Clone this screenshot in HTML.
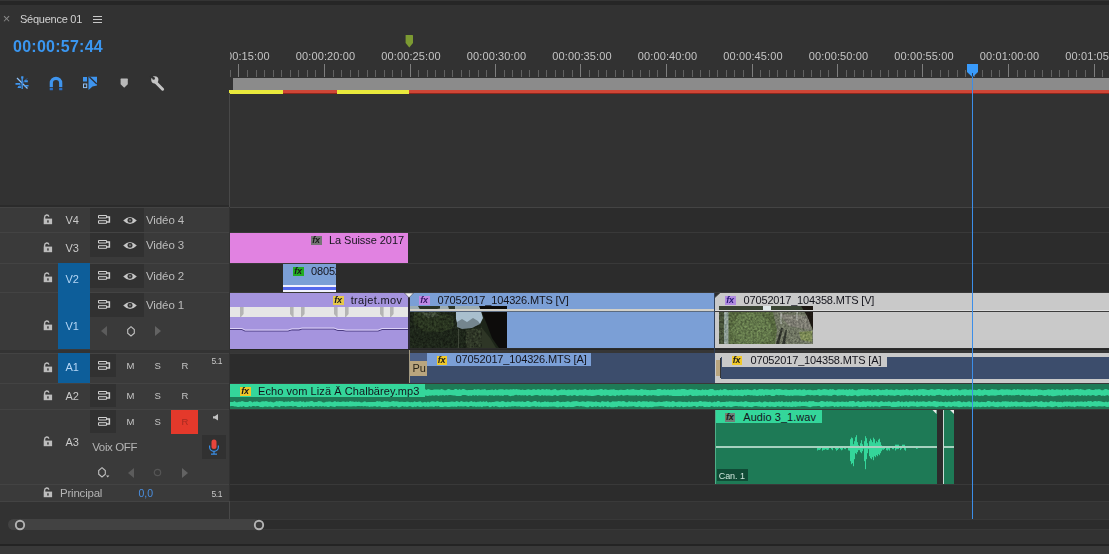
<!DOCTYPE html>
<html lang="fr">
<head>
<meta charset="utf-8">
<title>Séquence 01</title>
<style>
html,body{margin:0;padding:0;background:#323232;}
body{width:1109px;height:554px;position:relative;overflow:hidden;font-family:"Liberation Sans",sans-serif;font-size:11px;color:#b4b4b4;}
.a{position:absolute;}
.t{position:absolute;white-space:nowrap;line-height:12px;}
.ct{position:absolute;white-space:nowrap;line-height:12px;color:#14141c;font-size:11px;letter-spacing:-0.15px;}
.fx{position:absolute;width:10.5px;height:9px;font-size:9px;line-height:8.5px;font-style:italic;font-weight:bold;text-align:center;color:#161616;letter-spacing:-0.3px;text-indent:-0.5px;}
svg{position:absolute;overflow:visible;}
</style>
</head>
<body>
<svg width="0" height="0" style="left:0;top:0"><defs><filter id="nz" x="0" y="0" width="100%" height="100%" color-interpolation-filters="sRGB"><feTurbulence type="fractalNoise" baseFrequency="0.45 0.4" numOctaves="3" seed="4"/><feColorMatrix type="matrix" values="1.6 0 0 0 -0.3  1.6 0 0 0 -0.3  1.6 0 0 0 -0.3  0 0 0 0 1"/></filter><filter id="nz2" x="0" y="0" width="100%" height="100%" color-interpolation-filters="sRGB"><feTurbulence type="fractalNoise" baseFrequency="0.5 0.45" numOctaves="3" seed="9"/><feColorMatrix type="matrix" values="1.4 0 0 0 -0.2  1.4 0 0 0 -0.2  1.4 0 0 0 -0.2  0 0 0 0 1"/></filter></defs></svg>
<div class="a" style="left:0px;top:0px;width:1109px;height:5px;background:#262626;"></div>
<div class="a" style="left:0px;top:0px;width:1109px;height:1px;background:#343434;"></div>
<div class="t" style="left:2.7px;top:13.2px;font-size:13px;color:#8a8a8a;">×</div>
<div class="t" style="left:20px;top:13px;color:#d2d2d2;letter-spacing:-0.25px;">Séquence 01</div>
<svg class="a" style="left:93px;top:16px" width="9" height="8"><path d="M0 .5H9M0 3.5H9M0 6.5H9" stroke="#c8c8c8" stroke-width="1"/></svg>
<div class="t" style="left:13px;top:39px;font-size:16px;line-height:16px;font-weight:bold;color:#3a96f0;letter-spacing:0.25px;">00:00:57:44</div>
<svg style="left:14px;top:75px" width="17" height="16"><path d="M3 3L13.500 13.500" stroke="#8fc0f5" stroke-width="1.2"/><path d="M8.200 2V14" stroke="#3f95ee" stroke-width="1.3"/><path d="M13 3.500L3.500 13" stroke="#2d6fc0" stroke-width="1"/><path d="M7.200 1.200H9.400V3.400H7.200ZM10.500 5.300H13.800V7.200H10.500ZM1.500 8H6.200V9.800H1.500ZM10.500 10H14.500V11.600H10.500ZM4 11.300H7V13H4Z" fill="#3f95ee"/></svg>
<svg style="left:49px;top:76px" width="14" height="15"><path d="M2.300 11V7A4.700 4.700 0 0 1 11.700 7V11" fill="none" stroke="#3f95ee" stroke-width="3.200"/><path d="M.7 11.800H3.900V14.200H.7ZM10.100 11.800H13.300V14.200H10.100Z" fill="#2a70c8"/></svg>
<svg style="left:82px;top:76px" width="16" height="15"><rect x="1" y="1" width="4" height="4.500" fill="#3f95ee"/><rect x="1.500" y="8" width="3.200" height="3.600" fill="none" stroke="#8fc0f5" stroke-width="1"/><path d="M6.500 .8H15V9.500L10.500 10.500L6.500 14Z" fill="#3f95ee"/><path d="M7.500 1L14.800 8" stroke="#2b2f38" stroke-width="1.300"/></svg>
<svg style="left:120px;top:78px" width="9" height="11"><path d="M1 .6H7.300Q7.800 .6 7.800 1.200V6.300L4.200 9.800L.6 6.300V1.200Q.6 .6 1 .6Z" fill="#b9b9b9"/></svg>
<svg style="left:150px;top:75px" width="16" height="16"><path d="M5.200 6.800L12.600 14.200" stroke="#c4c4c4" stroke-width="3" stroke-linecap="round"/><circle cx="4.800" cy="4.800" r="3.600" fill="#c4c4c4"/><path d="M4.300 4.300L1.800 -.5L-.5 1.800Z" fill="#2f2f2f"/><circle cx="3.600" cy="3.400" r="1.300" fill="#2f2f2f"/></svg>
<svg style="left:0;top:0" width="1109" height="100"><path d="M230.5 70V77M247.5 70V77M256.5 70V77M264.5 70V77M273.5 70V77M281.5 70V77M290.5 70V77M298.5 70V77M307.5 70V77M315.5 70V77M333.5 70V77M341.5 70V77M350.5 70V77M358.5 70V77M367.5 70V77M375.5 70V77M384.5 70V77M392.5 70V77M401.5 70V77M418.5 70V77M427.5 70V77M435.5 70V77M444.5 70V77M452.5 70V77M461.5 70V77M469.5 70V77M478.5 70V77M486.5 70V77M504.5 70V77M512.5 70V77M521.5 70V77M529.5 70V77M538.5 70V77M546.5 70V77M555.5 70V77M563.5 70V77M572.5 70V77M589.5 70V77M598.5 70V77M606.5 70V77M615.5 70V77M623.5 70V77M632.5 70V77M640.5 70V77M649.5 70V77M657.5 70V77M675.5 70V77M683.5 70V77M692.5 70V77M700.5 70V77M709.5 70V77M717.5 70V77M726.5 70V77M734.5 70V77M743.5 70V77M760.5 70V77M769.5 70V77M777.5 70V77M786.5 70V77M794.5 70V77M803.5 70V77M811.5 70V77M820.5 70V77M828.5 70V77M846.5 70V77M854.5 70V77M863.5 70V77M871.5 70V77M880.5 70V77M888.5 70V77M897.5 70V77M905.5 70V77M914.5 70V77M931.5 70V77M940.5 70V77M948.5 70V77M957.5 70V77M965.5 70V77M974.5 70V77M982.5 70V77M991.5 70V77M999.5 70V77M1017.5 70V77M1025.5 70V77M1034.5 70V77M1042.5 70V77M1051.5 70V77M1059.5 70V77M1068.5 70V77M1076.5 70V77M1085.5 70V77M1102.5 70V77" stroke="#626262" stroke-width="1" fill="none"/><path d="M238.5 64V77M324.5 64V77M410.5 64V77M495.5 64V77M580.5 64V77M666.5 64V77M752.5 64V77M837.5 64V77M922.5 64V77M1008.5 64V77M1094.5 64V77" stroke="#7e7e7e" stroke-width="1" fill="none"/></svg>
<div class="a" style="left:230px;top:44px;width:879px;height:20px;overflow:hidden;">
<div class="t" style="left:-30.0px;top:6px;width:80px;text-align:center;color:#c4c4c4;letter-spacing:0.12px;">00:00:15:00</div>
<div class="t" style="left:55.5px;top:6px;width:80px;text-align:center;color:#c4c4c4;letter-spacing:0.12px;">00:00:20:00</div>
<div class="t" style="left:141.0px;top:6px;width:80px;text-align:center;color:#c4c4c4;letter-spacing:0.12px;">00:00:25:00</div>
<div class="t" style="left:226.5px;top:6px;width:80px;text-align:center;color:#c4c4c4;letter-spacing:0.12px;">00:00:30:00</div>
<div class="t" style="left:312.0px;top:6px;width:80px;text-align:center;color:#c4c4c4;letter-spacing:0.12px;">00:00:35:00</div>
<div class="t" style="left:397.5px;top:6px;width:80px;text-align:center;color:#c4c4c4;letter-spacing:0.12px;">00:00:40:00</div>
<div class="t" style="left:483.0px;top:6px;width:80px;text-align:center;color:#c4c4c4;letter-spacing:0.12px;">00:00:45:00</div>
<div class="t" style="left:568.5px;top:6px;width:80px;text-align:center;color:#c4c4c4;letter-spacing:0.12px;">00:00:50:00</div>
<div class="t" style="left:654.0px;top:6px;width:80px;text-align:center;color:#c4c4c4;letter-spacing:0.12px;">00:00:55:00</div>
<div class="t" style="left:739.5px;top:6px;width:80px;text-align:center;color:#c4c4c4;letter-spacing:0.12px;">00:01:00:00</div>
<div class="t" style="left:825.0px;top:6px;width:80px;text-align:center;color:#c4c4c4;letter-spacing:0.12px;">00:01:05:00</div>
</div>
<div class="a" style="left:233px;top:78px;width:876px;height:12px;background:#8b8b8b;"></div>
<div class="a" style="left:229px;top:90px;width:880px;height:3.5px;background:#8e261d;"></div>
<div class="a" style="left:229px;top:90px;width:880px;height:2.6px;background:#cf4636;"></div>
<div class="a" style="left:229px;top:90px;width:54px;height:3.5px;background:#e9e93c;"></div>
<div class="a" style="left:337px;top:90px;width:72px;height:3.5px;background:#e9e93c;"></div>
<svg style="left:405px;top:35px" width="9" height="13"><path d="M1 0H7.5Q8 0 8 .6V8L4.3 12.5L.6 8V.6Q.6 0 1 0Z" fill="#7c9a32"/></svg>
<div class="a" style="left:229px;top:93px;width:1px;height:114px;background:#484848;"></div>
<div class="a" style="left:229px;top:501px;width:1px;height:18px;background:#484848;"></div>
<div class="a" style="left:0px;top:205px;width:229px;height:2px;background:#2b2b2b;"></div>
<div class="a" style="left:0px;top:207px;width:229px;height:294px;background:#3a3a3a;"></div>
<div class="a" style="left:0px;top:207px;width:229px;height:1px;background:#434343;"></div>
<div class="a" style="left:0px;top:232px;width:229px;height:1px;background:#434343;"></div>
<div class="a" style="left:0px;top:263px;width:229px;height:1px;background:#434343;"></div>
<div class="a" style="left:0px;top:292px;width:229px;height:1px;background:#434343;"></div>
<div class="a" style="left:0px;top:353px;width:229px;height:1px;background:#434343;"></div>
<div class="a" style="left:0px;top:383px;width:229px;height:1px;background:#434343;"></div>
<div class="a" style="left:0px;top:409px;width:229px;height:1px;background:#434343;"></div>
<div class="a" style="left:0px;top:484px;width:229px;height:1px;background:#434343;"></div>
<div class="a" style="left:0px;top:350px;width:229px;height:3px;background:#333;"></div>
<div class="a" style="left:0px;top:501px;width:229px;height:1px;background:#434343;"></div>
<div class="a" style="left:230px;top:207px;width:879px;height:294px;background:#2c2c2c;"></div>
<div class="a" style="left:230px;top:207px;width:879px;height:1px;background:#444;"></div>
<div class="a" style="left:230px;top:232px;width:879px;height:1px;background:#393939;"></div>
<div class="a" style="left:230px;top:263px;width:879px;height:1px;background:#393939;"></div>
<div class="a" style="left:230px;top:292px;width:879px;height:1px;background:#393939;"></div>
<div class="a" style="left:230px;top:353px;width:879px;height:1px;background:#393939;"></div>
<div class="a" style="left:230px;top:383px;width:879px;height:1px;background:#393939;"></div>
<div class="a" style="left:230px;top:409px;width:879px;height:1px;background:#393939;"></div>
<div class="a" style="left:230px;top:484px;width:879px;height:1px;background:#393939;"></div>
<div class="a" style="left:230px;top:349px;width:879px;height:1px;background:#262626;"></div>
<div class="a" style="left:230px;top:350px;width:879px;height:3px;background:#363636;"></div>
<div class="a" style="left:230px;top:501px;width:879px;height:1px;background:#3a3a3a;"></div>
<div class="a" style="left:58px;top:263px;width:32px;height:86px;background:#0d5e9a;"></div>
<div class="a" style="left:58px;top:353px;width:32px;height:30px;background:#0d5e9a;"></div>
<div class="a" style="left:90px;top:208px;width:54px;height:24px;background:#313131;"></div>
<svg style="left:43px;top:214px" width="10" height="11"><path d="M1.6 5V3.2A2.2 2.3 0 0 1 5.9 2.6" fill="none" stroke="#bdbdbd" stroke-width="1.4"/><rect x="0.7" y="4.6" width="8.4" height="5.6" fill="#bdbdbd"/><rect x="4.2" y="6.3" width="1.5" height="2.3" fill="#3a3a3a"/></svg>
<div class="t" style="left:65.5px;top:213.8px;color:#c9c9c9;font-size:11px;">V4</div>
<svg style="left:98px;top:215px" width="13" height="9" shape-rendering="geometricPrecision"><path d="M.5 .5H8.500V3H.5ZM.5 5.700H8.500V8.300H.5Z" fill="none" stroke="#cfcfcf" stroke-width="1"/><path d="M9 2H11.400V7H9" fill="none" stroke="#cfcfcf" stroke-width="1.500"/></svg>
<svg style="left:123px;top:216px" width="14" height="9"><path d="M.2 4.4Q7 -2.6 13.8 4.4Q7 11.4 .2 4.4Z" fill="#c6c6c6"/><circle cx="7" cy="4.2" r="2.5" fill="#333"/><circle cx="7" cy="4.2" r="1" fill="#777"/></svg>
<div class="t" style="left:146px;top:214px;color:#bcbcbc;font-size:11.5px;letter-spacing:-0.1px;">Vidéo 4</div>
<div class="a" style="left:90px;top:233px;width:54px;height:24px;background:#313131;"></div>
<svg style="left:43px;top:242px" width="10" height="11"><path d="M1.6 5V3.2A2.2 2.3 0 0 1 5.9 2.6" fill="none" stroke="#bdbdbd" stroke-width="1.4"/><rect x="0.7" y="4.6" width="8.4" height="5.6" fill="#bdbdbd"/><rect x="4.2" y="6.3" width="1.5" height="2.3" fill="#3a3a3a"/></svg>
<div class="t" style="left:65.5px;top:241.8px;color:#c9c9c9;font-size:11px;">V3</div>
<svg style="left:98px;top:240px" width="13" height="9" shape-rendering="geometricPrecision"><path d="M.5 .5H8.500V3H.5ZM.5 5.700H8.500V8.300H.5Z" fill="none" stroke="#cfcfcf" stroke-width="1"/><path d="M9 2H11.400V7H9" fill="none" stroke="#cfcfcf" stroke-width="1.500"/></svg>
<svg style="left:123px;top:241px" width="14" height="9"><path d="M.2 4.4Q7 -2.6 13.8 4.4Q7 11.4 .2 4.4Z" fill="#c6c6c6"/><circle cx="7" cy="4.2" r="2.5" fill="#333"/><circle cx="7" cy="4.2" r="1" fill="#777"/></svg>
<div class="t" style="left:146px;top:239px;color:#bcbcbc;font-size:11.5px;letter-spacing:-0.1px;">Vidéo 3</div>
<div class="a" style="left:90px;top:264px;width:54px;height:24px;background:#313131;"></div>
<svg style="left:43px;top:272px" width="10" height="11"><path d="M1.6 5V3.2A2.2 2.3 0 0 1 5.9 2.6" fill="none" stroke="#bdbdbd" stroke-width="1.4"/><rect x="0.7" y="4.6" width="8.4" height="5.6" fill="#bdbdbd"/><rect x="4.2" y="6.3" width="1.5" height="2.3" fill="#3a3a3a"/></svg>
<div class="t" style="left:65.5px;top:272.8px;color:#c9c9c9;font-size:11px;color:#b5d6f5;">V2</div>
<svg style="left:98px;top:271px" width="13" height="9" shape-rendering="geometricPrecision"><path d="M.5 .5H8.500V3H.5ZM.5 5.700H8.500V8.300H.5Z" fill="none" stroke="#cfcfcf" stroke-width="1"/><path d="M9 2H11.400V7H9" fill="none" stroke="#cfcfcf" stroke-width="1.500"/></svg>
<svg style="left:123px;top:272px" width="14" height="9"><path d="M.2 4.4Q7 -2.6 13.8 4.4Q7 11.4 .2 4.4Z" fill="#c6c6c6"/><circle cx="7" cy="4.2" r="2.5" fill="#333"/><circle cx="7" cy="4.2" r="1" fill="#777"/></svg>
<div class="t" style="left:146px;top:270px;color:#bcbcbc;font-size:11.5px;letter-spacing:-0.1px;">Vidéo 2</div>
<div class="a" style="left:90px;top:293px;width:54px;height:24px;background:#313131;"></div>
<svg style="left:43px;top:320px" width="10" height="11"><path d="M1.6 5V3.2A2.2 2.3 0 0 1 5.9 2.6" fill="none" stroke="#bdbdbd" stroke-width="1.4"/><rect x="0.7" y="4.6" width="8.4" height="5.6" fill="#bdbdbd"/><rect x="4.2" y="6.3" width="1.5" height="2.3" fill="#3a3a3a"/></svg>
<div class="t" style="left:65.5px;top:319.8px;color:#c9c9c9;font-size:11px;color:#b5d6f5;">V1</div>
<svg style="left:98px;top:300px" width="13" height="9" shape-rendering="geometricPrecision"><path d="M.5 .5H8.500V3H.5ZM.5 5.700H8.500V8.300H.5Z" fill="none" stroke="#cfcfcf" stroke-width="1"/><path d="M9 2H11.400V7H9" fill="none" stroke="#cfcfcf" stroke-width="1.500"/></svg>
<svg style="left:123px;top:301px" width="14" height="9"><path d="M.2 4.4Q7 -2.6 13.8 4.4Q7 11.4 .2 4.4Z" fill="#c6c6c6"/><circle cx="7" cy="4.2" r="2.5" fill="#333"/><circle cx="7" cy="4.2" r="1" fill="#777"/></svg>
<div class="t" style="left:146px;top:299px;color:#bcbcbc;font-size:11.5px;letter-spacing:-0.1px;">Vidéo 1</div>
<svg style="left:101px;top:326px" width="6" height="10"><path d="M6 0V10L0 5Z" fill="#5c5c5c"/></svg>
<svg style="left:127px;top:325.5px" width="8" height="11"><path d="M4 .7L7.300 3.500V7.200L4 10L.7 7.200V3.500Z" fill="none" stroke="#c0c0c0" stroke-width="1.1"/></svg>
<svg style="left:155px;top:326px" width="6" height="10"><path d="M0 0V10L6 5Z" fill="#636363"/></svg>
<div class="a" style="left:90px;top:354px;width:26px;height:23px;background:#313131;"></div>
<svg style="left:43px;top:361.5px" width="10" height="11"><path d="M1.6 5V3.2A2.2 2.3 0 0 1 5.9 2.6" fill="none" stroke="#bdbdbd" stroke-width="1.4"/><rect x="0.7" y="4.6" width="8.4" height="5.6" fill="#bdbdbd"/><rect x="4.2" y="6.3" width="1.5" height="2.3" fill="#3a3a3a"/></svg>
<div class="t" style="left:65.5px;top:361.3px;color:#c9c9c9;font-size:11px;color:#b5d6f5;">A1</div>
<svg style="left:98px;top:360.6px" width="13" height="9" shape-rendering="geometricPrecision"><path d="M.5 .5H8.500V3H.5ZM.5 5.700H8.500V8.300H.5Z" fill="none" stroke="#cfcfcf" stroke-width="1"/><path d="M9 2H11.400V7H9" fill="none" stroke="#cfcfcf" stroke-width="1.500"/></svg>
<div class="t" style="left:126.5px;top:359.9px;color:#c6c6c6;font-size:9.5px;">M</div>
<div class="t" style="left:154.5px;top:359.9px;color:#c6c6c6;font-size:9.5px;">S</div>
<div class="t" style="left:181.5px;top:359.9px;color:#c6c6c6;font-size:9.5px;">R</div>
<div class="a" style="left:90px;top:384px;width:26px;height:23px;background:#313131;"></div>
<svg style="left:43px;top:390px" width="10" height="11"><path d="M1.6 5V3.2A2.2 2.3 0 0 1 5.9 2.6" fill="none" stroke="#bdbdbd" stroke-width="1.4"/><rect x="0.7" y="4.6" width="8.4" height="5.6" fill="#bdbdbd"/><rect x="4.2" y="6.3" width="1.5" height="2.3" fill="#3a3a3a"/></svg>
<div class="t" style="left:65.5px;top:389.8px;color:#c9c9c9;font-size:11px;">A2</div>
<svg style="left:98px;top:390.6px" width="13" height="9" shape-rendering="geometricPrecision"><path d="M.5 .5H8.500V3H.5ZM.5 5.700H8.500V8.300H.5Z" fill="none" stroke="#cfcfcf" stroke-width="1"/><path d="M9 2H11.400V7H9" fill="none" stroke="#cfcfcf" stroke-width="1.500"/></svg>
<div class="t" style="left:126.5px;top:389.9px;color:#c6c6c6;font-size:9.5px;">M</div>
<div class="t" style="left:154.5px;top:389.9px;color:#c6c6c6;font-size:9.5px;">S</div>
<div class="t" style="left:181.5px;top:389.9px;color:#c6c6c6;font-size:9.5px;">R</div>
<div class="a" style="left:90px;top:410px;width:26px;height:23px;background:#313131;"></div>
<svg style="left:43px;top:436px" width="10" height="11"><path d="M1.6 5V3.2A2.2 2.3 0 0 1 5.9 2.6" fill="none" stroke="#bdbdbd" stroke-width="1.4"/><rect x="0.7" y="4.6" width="8.4" height="5.6" fill="#bdbdbd"/><rect x="4.2" y="6.3" width="1.5" height="2.3" fill="#3a3a3a"/></svg>
<div class="t" style="left:65.5px;top:435.8px;color:#c9c9c9;font-size:11px;">A3</div>
<svg style="left:98px;top:416.6px" width="13" height="9" shape-rendering="geometricPrecision"><path d="M.5 .5H8.500V3H.5ZM.5 5.700H8.500V8.300H.5Z" fill="none" stroke="#cfcfcf" stroke-width="1"/><path d="M9 2H11.400V7H9" fill="none" stroke="#cfcfcf" stroke-width="1.500"/></svg>
<div class="t" style="left:126.5px;top:415.9px;color:#c6c6c6;font-size:9.5px;">M</div>
<div class="t" style="left:154.5px;top:415.9px;color:#c6c6c6;font-size:9.5px;">S</div>
<div class="a" style="left:171px;top:410px;width:27px;height:24px;background:#e4392b;"></div>
<div class="t" style="left:181.5px;top:415.9px;color:#a52a20;font-size:9.5px;">R</div>
<div class="t" style="left:211.5px;top:355px;color:#c8c8c8;font-size:8.5px;letter-spacing:-0.45px;">5.1</div>
<svg style="left:213px;top:414px" width="6" height="7"><path d="M0 2.2H1.8L5 0V6.5L1.8 4.4H0Z" fill="#c2c2c2"/></svg>
<div class="t" style="left:92.2px;top:441px;color:#b4b4b4;font-size:11.5px;letter-spacing:-0.366px;">Voix OFF</div>
<div class="a" style="left:202px;top:435px;width:24px;height:24px;background:#313131;"></div>
<svg style="left:208px;top:439px" width="12" height="16"><rect x="3.5" y=".5" width="5" height="9.5" rx="2.5" fill="#e8453c"/><path d="M1.6 6.5V8A4.4 4.4 0 0 0 10.4 8V6.5" fill="none" stroke="#3a8fe8" stroke-width="1.2"/><path d="M6 12.2V15M3 15.2H9" stroke="#3a8fe8" stroke-width="1.2" fill="none"/></svg>
<svg style="left:98px;top:467px" width="8" height="11"><path d="M4 .7L7.300 3.500V7.200L4 10L.7 7.200V3.500Z" fill="none" stroke="#c0c0c0" stroke-width="1.1"/></svg>
<svg style="left:106px;top:475px" width="4" height="3"><path d="M0 .5H3.4L1.7 2.6Z" fill="#c0c0c0"/></svg>
<svg style="left:128px;top:468px" width="6" height="10"><path d="M6 0V10L0 5Z" fill="#5c5c5c"/></svg>
<svg style="left:182px;top:468px" width="6" height="10"><path d="M0 0V10L6 5Z" fill="#636363"/></svg>
<svg style="left:153px;top:467px" width="9" height="11"><circle cx="4.5" cy="5.5" r="3.2" fill="none" stroke="#555" stroke-width="1.2"/></svg>
<svg style="left:43px;top:487px" width="10" height="11"><path d="M1.6 5V3.2A2.2 2.3 0 0 1 5.9 2.6" fill="none" stroke="#bdbdbd" stroke-width="1.4"/><rect x="0.7" y="4.6" width="8.4" height="5.6" fill="#bdbdbd"/><rect x="4.2" y="6.3" width="1.5" height="2.3" fill="#3a3a3a"/></svg>
<div class="t" style="left:60px;top:487px;color:#b4b4b4;font-size:11.5px;letter-spacing:-0.211px;">Principal</div>
<div class="t" style="left:138.5px;top:487px;color:#4a8fe0;font-size:10.5px;">0,0</div>
<div class="t" style="left:211.5px;top:488px;color:#c8c8c8;font-size:8.5px;letter-spacing:-0.45px;">5.1</div>
<div class="a" style="left:230px;top:233px;width:178px;height:30px;background:#e182e1;overflow:hidden;"></div>
<div class="fx" style="left:311px;top:236px;background:#757575;color:#1a1a1a;">fx</div>
<div class="ct" style="left:329px;top:233.6px;letter-spacing:-0.060px;">La Suisse 2017</div>
<div class="a" style="left:283px;top:264px;width:53px;height:28px;background:#7b9fd6;overflow:hidden;"><div class="ct" style="left:28px;top:0.8px;">08052</div></div>
<div class="fx" style="left:293px;top:267px;background:#22ac22;color:#1a1a1a;">fx</div>
<div class="a" style="left:283px;top:285px;width:53px;height:7px;background:#f2f2ff;"></div>
<div class="a" style="left:283px;top:286.5px;width:53px;height:3.5px;background:#5468ec;"></div>
<div class="a" style="left:230px;top:293px;width:178px;height:56px;background:#a594de;overflow:hidden;"></div>
<div class="a" style="left:230px;top:307px;width:178px;height:10px;background:#e6e6e6;"></div>
<svg style="left:0;top:307px" width="420" height="10"><path d="M240 0H243.6V7L241 10H240ZM290 0H293.6V10H292.6L290 7ZM301 0H304.6V7L302 10H301ZM334 0H337.6V10H336.6L334 7ZM345 0H348.6V7L346 10H345ZM380 0H383.6V10H382.6L380 7ZM390 0H393.6V7L391 10H390Z" fill="#b4b4b4"/></svg>
<svg style="left:0;top:0" width="420" height="350"><path d="M230 328.5H242L245 330H288L292 328.8H299L302 328H334L338 329.5H343L346 330H378L382 328.5H408" transform="translate(0,1)" fill="none" stroke="#4a3b82" stroke-width="1.2"/><path d="M230 328.5H242L245 330H288L292 328.8H299L302 328H334L338 329.5H343L346 330H378L382 328.5H408" fill="none" stroke="#ddd2f7" stroke-width="1"/></svg>
<div class="fx" style="left:333px;top:296px;background:#e6c84a;color:#1a1a1a;">fx</div>
<div class="ct" style="left:350.7px;top:293.6px;letter-spacing:0.331px;">trajet.mov</div>
<div class="a" style="left:409px;top:293px;width:306px;height:55px;background:#7b9fd6;overflow:hidden;"></div>
<div class="fx" style="left:419px;top:296px;background:#c08ae6;color:#3a1a6a;">fx</div>
<div class="ct" style="left:437.6px;top:293.6px;letter-spacing:-0.154px;">07052017_104326.MTS [V]</div>
<svg style="left:410px;top:306px" width="97" height="42" viewBox="0 0 97 42"><rect width="97" height="42" fill="#1d2519"/><path d="M4 5L22 4L34 8L43 10L44 22L30 26L12 25L3 16Z" fill="#28331f"/><path d="M10 6L24 5L30 10L18 12Z" fill="#3b4634"/><path d="M56 24L72 22L80 32L86 42H56Z" fill="#2e3626"/><rect width="72" height="42" filter="url(#nz)" style="mix-blend-mode:overlay" opacity=".4"/><path d="M0 0H70V3.500H0Z" fill="#9cacb2"/><path d="M8 0H30V2.500L24 3.500H10ZM38 0H45V3H39Z" fill="#2a3326"/><path d="M46 5H71L73 12L70 18L66 15L62 19L56 18L52 21L47.500 19L46 13Z" fill="#a9bfce"/><path d="M47 16L52 13L57 16L63 12L68 15L70 18L62 22L52 23L47 21Z" fill="#74858e"/><path d="M48.500 23V42" stroke="#4e5446" stroke-width=".7"/><path d="M69 0H97V42H89L82 32L76 16Z" fill="#0d0c0b"/></svg>
<div class="a" style="left:409px;top:308.5px;width:306px;height:2px;background:#d2d0c8;"></div>
<div class="a" style="left:409px;top:310.5px;width:306px;height:0.8px;background:#5a6a80;"></div>
<div class="a" style="left:715px;top:293px;width:394px;height:55px;background:#c9c9c9;overflow:hidden;"></div>
<div class="fx" style="left:725px;top:296px;background:#b08ae0;color:#2a1a7a;">fx</div>
<div class="ct" style="left:743.6px;top:293.6px;letter-spacing:-0.172px;">07052017_104358.MTS [V]</div>
<svg style="left:719px;top:306px" width="94" height="38" viewBox="0 0 94 38"><rect width="94" height="38" fill="#56683f"/><rect width="94" height="4" fill="#3a4434"/><path d="M44 0H52V4H44Z" fill="#dfe8ea"/><rect x="5" y="4" width="4.5" height="34" fill="#8c9c94"/><path d="M0 4H5V38H0Z" fill="#46523a"/><path d="M54 6L94 4V38H56L58 24Z" fill="#6f7562"/><path d="M60 8L90 10L92 24L70 20Z" fill="#7d7c72"/><path d="M64 22L60 38H57L62 22ZM68 24L66 38H63L66.500 24Z" fill="#30342c"/><path d="M82 0H94V24L88 10Z" fill="#1c1712"/><path d="M20 8L40 6L52 18L54 34L40 38H18L12 24Z" fill="#62774a"/><path d="M80 26L93 25V36L82 34Z" fill="#7c8a56"/><path d="M62 6V18M78 5V14" stroke="#c8ccc8" stroke-width=".8"/><rect y="4" width="94" height="34" filter="url(#nz2)" style="mix-blend-mode:overlay" opacity=".32"/></svg>
<div class="a" style="left:715px;top:309.5px;width:394px;height:1.2px;background:#dcdcdc;"></div>
<div class="a" style="left:715px;top:310.6px;width:394px;height:1px;background:#3c3c3c;"></div>
<svg style="left:715px;top:293px" width="6" height="5"><path d="M0 0H5L0 4.500Z" fill="#2c2c2c"/><path d="M0 4.5L5 0" stroke="#555" stroke-width=".8"/></svg>
<div class="a" style="left:408px;top:293px;width:1.8px;height:56px;background:#2e2a3c;"></div>
<div class="a" style="left:409px;top:350px;width:1.3px;height:33px;background:#a39a82;"></div>
<div class="a" style="left:714px;top:293px;width:1px;height:90px;background:#30405a;"></div>
<div class="a" style="left:410px;top:353px;width:305px;height:30px;background:#3c4d6c;overflow:hidden;"></div>
<div class="a" style="left:410px;top:353px;width:17px;height:8px;background:#4c6088;"></div>
<div class="a" style="left:427px;top:353px;width:164px;height:13px;background:#7b9fd6;"></div>
<div class="fx" style="left:436.5px;top:355.5px;background:#f0c828;color:#1a1a1a;">fx</div>
<div class="ct" style="left:455.6px;top:353.1px;letter-spacing:-0.154px;">07052017_104326.MTS [A]</div>
<div class="a" style="left:410px;top:361px;width:16.5px;height:14.5px;background:#b9a57e;"></div>
<div class="ct" style="left:412.5px;top:361.6px;color:#2a2418;">Pu</div>
<div class="a" style="left:715px;top:353px;width:394px;height:30px;background:#c9c9c9;overflow:hidden;"></div>
<div class="a" style="left:721px;top:357px;width:388px;height:21.5px;background:#3c4d6c;"></div>
<div class="a" style="left:721.5px;top:356.5px;width:165px;height:10px;background:#c9c9c9;"></div>
<div class="fx" style="left:731.5px;top:356px;background:#f0c828;color:#1a1a1a;">fx</div>
<div class="ct" style="left:750.5px;top:354.1px;letter-spacing:-0.163px;">07052017_104358.MTS [A]</div>
<div class="a" style="left:716px;top:360px;width:5px;height:16px;background:#b9a57e;"></div>
<div class="a" style="left:719.5px;top:358px;width:1.5px;height:20px;background:#333;"></div>
<svg style="left:404px;top:293px" width="10" height="6"><path d="M.5 0H9.500L5 4.800Z" fill="#f0f0f0" stroke="#3a3a3a" stroke-width=".5"/></svg>
<div class="a" style="left:230px;top:384px;width:879px;height:24.5px;background:#1e7a56;overflow:hidden;"></div>
<svg style="left:0;top:0" width="1109" height="420"><path d="M230.0 389.2L231.5 389.4L233.0 389.8L234.5 388.9L236.0 389.3L237.5 390.3L239.0 390.1L240.5 389.8L242.0 389.8L243.5 389.6L245.0 389.8L246.5 390.0L248.0 389.3L249.5 390.1L251.0 389.9L252.5 389.9L254.0 389.5L255.5 389.5L257.0 390.1L258.5 389.1L260.0 390.3L261.5 389.8L263.0 389.6L264.5 389.4L266.0 389.7L267.5 389.9L269.0 390.1L270.5 389.8L272.0 390.1L273.5 390.2L275.0 389.9L276.5 390.1L278.0 389.3L279.5 390.1L281.0 389.0L282.5 389.5L284.0 389.3L285.5 390.1L287.0 389.8L288.5 389.9L290.0 390.1L291.5 389.6L293.0 389.3L294.5 389.7L296.0 389.2L297.5 389.8L299.0 389.0L300.5 389.3L302.0 390.2L303.5 389.5L305.0 389.8L306.5 389.7L308.0 390.2L309.5 389.5L311.0 389.2L312.5 390.3L314.0 389.7L315.5 389.5L317.0 388.9L318.5 389.8L320.0 389.8L321.5 389.9L323.0 389.9L324.5 388.9L326.0 389.8L327.5 389.3L329.0 389.7L330.5 389.4L332.0 389.4L333.5 389.3L335.0 390.0L336.5 389.7L338.0 389.3L339.5 390.0L341.0 389.2L342.5 389.9L344.0 389.4L345.5 390.1L347.0 390.1L348.5 389.4L350.0 390.1L351.5 389.2L353.0 389.6L354.5 390.0L356.0 389.2L357.5 390.0L359.0 390.0L360.5 389.1L362.0 390.0L363.5 389.4L365.0 389.5L366.5 390.2L368.0 388.9L369.5 390.1L371.0 389.5L372.5 390.2L374.0 389.9L375.5 389.8L377.0 389.3L378.5 389.2L380.0 389.7L381.5 390.0L383.0 390.2L384.5 390.2L386.0 390.2L387.5 388.9L389.0 389.1L390.5 389.8L392.0 389.5L393.5 389.8L395.0 389.3L396.5 389.6L398.0 389.4L399.5 389.6L401.0 389.1L402.5 390.2L404.0 390.1L405.5 389.8L407.0 389.0L408.5 389.3L410.0 389.5L411.5 390.0L413.0 389.0L414.5 389.1L416.0 390.3L417.5 389.0L419.0 389.3L420.5 389.4L422.0 389.7L423.5 389.2L425.0 389.1L426.5 389.9L428.0 389.0L429.5 389.4L431.0 390.0L432.5 390.0L434.0 389.5L435.5 389.6L437.0 389.5L438.5 389.5L440.0 389.7L441.5 389.0L443.0 389.5L444.5 390.2L446.0 390.2L447.5 389.3L449.0 389.1L450.5 389.8L452.0 390.0L453.5 389.9L455.0 389.0L456.5 388.9L458.0 390.0L459.5 389.0L461.0 390.1L462.5 388.9L464.0 389.1L465.5 389.8L467.0 390.2L468.5 390.0L470.0 390.0L471.5 389.9L473.0 389.9L474.5 389.0L476.0 389.7L477.5 389.2L479.0 389.2L480.5 390.0L482.0 389.4L483.5 389.4L485.0 389.0L486.5 390.3L488.0 389.9L489.5 389.9L491.0 389.8L492.5 389.6L494.0 390.2L495.5 389.0L497.0 390.2L498.5 389.5L500.0 389.2L501.5 389.2L503.0 389.3L504.5 389.9L506.0 389.3L507.5 389.5L509.0 389.7L510.5 389.2L512.0 389.6L513.5 389.1L515.0 389.4L516.5 389.1L518.0 389.6L519.5 389.6L521.0 390.1L522.5 389.6L524.0 390.1L525.5 389.9L527.0 389.6L528.5 389.2L530.0 389.8L531.5 390.1L533.0 389.2L534.5 389.2L536.0 390.1L537.5 389.3L539.0 389.3L540.5 389.9L542.0 389.0L543.5 389.3L545.0 389.7L546.5 388.9L548.0 389.5L549.5 389.2L551.0 390.2L552.5 389.7L554.0 389.3L555.5 389.1L557.0 390.2L558.5 390.2L560.0 390.0L561.5 389.3L563.0 389.8L564.5 389.3L566.0 390.2L567.5 389.7L569.0 389.6L570.5 389.9L572.0 389.7L573.5 389.8L575.0 389.2L576.5 389.8L578.0 390.2L579.5 389.4L581.0 389.7L582.5 389.8L584.0 389.3L585.5 389.0L587.0 390.0L588.5 389.9L590.0 389.3L591.5 390.1L593.0 389.6L594.5 390.0L596.0 389.4L597.5 389.7L599.0 389.4L600.5 389.1L602.0 389.0L603.5 390.0L605.0 389.2L606.5 389.5L608.0 390.0L609.5 389.7L611.0 389.5L612.5 389.6L614.0 389.2L615.5 390.0L617.0 390.0L618.5 390.2L620.0 389.7L621.5 389.8L623.0 389.9L624.5 390.1L626.0 389.7L627.5 388.9L629.0 389.8L630.5 389.6L632.0 389.2L633.5 389.0L635.0 389.8L636.5 389.7L638.0 390.1L639.5 390.0L641.0 389.0L642.5 389.2L644.0 389.7L645.5 389.4L647.0 389.9L648.5 390.1L650.0 390.2L651.5 389.9L653.0 390.0L654.5 390.1L656.0 390.0L657.5 389.1L659.0 389.0L660.5 389.1L662.0 389.9L663.5 389.5L665.0 389.3L666.5 390.0L668.0 389.2L669.5 389.9L671.0 389.4L672.5 389.7L674.0 388.9L675.5 390.0L677.0 389.5L678.5 389.2L680.0 389.5L681.5 388.9L683.0 389.1L684.5 389.0L686.0 389.5L687.5 389.9L689.0 389.5L690.5 388.9L692.0 389.2L693.5 389.6L695.0 389.8L696.5 389.1L698.0 389.9L699.5 390.0L701.0 390.2L702.5 389.2L704.0 390.0L705.5 389.4L707.0 389.9L708.5 389.7L710.0 388.9L711.5 389.1L713.0 389.0L714.5 390.2L716.0 390.3L717.5 390.0L719.0 390.2L720.5 389.3L722.0 390.2L723.5 389.3L725.0 389.1L726.5 389.4L728.0 390.2L729.5 389.9L731.0 390.1L732.5 390.2L734.0 389.5L735.5 390.0L737.0 389.3L738.5 389.9L740.0 389.9L741.5 389.6L743.0 389.9L744.5 389.6L746.0 389.8L747.5 389.2L749.0 389.8L750.5 390.1L752.0 390.2L753.5 389.4L755.0 389.0L756.5 390.2L758.0 389.7L759.5 389.0L761.0 389.2L762.5 389.1L764.0 389.7L765.5 389.2L767.0 389.2L768.5 389.5L770.0 389.7L771.5 389.6L773.0 389.1L774.5 390.1L776.0 388.9L777.5 389.2L779.0 389.0L780.5 389.2L782.0 389.8L783.5 390.0L785.0 389.4L786.5 389.5L788.0 390.1L789.5 390.0L791.0 389.7L792.5 389.9L794.0 389.4L795.5 389.0L797.0 389.9L798.5 389.8L800.0 389.2L801.5 390.3L803.0 389.5L804.5 389.2L806.0 390.2L807.5 390.1L809.0 389.8L810.5 389.7L812.0 390.2L813.5 390.2L815.0 390.0L816.5 390.3L818.0 389.3L819.5 389.2L821.0 389.9L822.5 389.6L824.0 389.0L825.5 389.3L827.0 389.4L828.5 389.9L830.0 389.0L831.5 389.5L833.0 389.1L834.5 389.9L836.0 390.3L837.5 389.4L839.0 389.3L840.5 389.6L842.0 389.4L843.5 389.3L845.0 390.1L846.5 389.3L848.0 390.0L849.5 389.1L851.0 389.7L852.5 389.0L854.0 390.0L855.5 390.3L857.0 390.3L858.5 389.2L860.0 389.5L861.5 389.0L863.0 389.0L864.5 389.2L866.0 389.5L867.5 389.0L869.0 389.8L870.5 390.2L872.0 389.2L873.5 390.0L875.0 389.6L876.5 389.7L878.0 389.1L879.5 389.8L881.0 390.2L882.5 389.8L884.0 390.0L885.5 389.5L887.0 389.1L888.5 389.9L890.0 389.7L891.5 389.4L893.0 390.0L894.5 390.2L896.0 389.3L897.5 389.5L899.0 390.1L900.5 389.8L902.0 389.7L903.5 389.6L905.0 389.9L906.5 389.0L908.0 389.4L909.5 390.2L911.0 389.8L912.5 390.2L914.0 389.4L915.5 389.3L917.0 390.2L918.5 389.3L920.0 389.3L921.5 389.3L923.0 389.0L924.5 389.2L926.0 389.6L927.5 390.1L929.0 390.0L930.5 389.3L932.0 389.0L933.5 389.6L935.0 389.7L936.5 389.2L938.0 389.1L939.5 389.1L941.0 389.8L942.5 389.1L944.0 390.0L945.5 389.2L947.0 390.1L948.5 390.2L950.0 389.4L951.5 389.4L953.0 389.3L954.5 389.1L956.0 389.4L957.5 389.0L959.0 390.2L960.5 390.3L962.0 389.4L963.5 389.6L965.0 389.3L966.5 389.4L968.0 390.0L969.5 389.5L971.0 389.5L972.5 390.1L974.0 389.7L975.5 390.1L977.0 390.2L978.5 389.1L980.0 389.2L981.5 390.3L983.0 390.1L984.5 388.9L986.0 390.0L987.5 389.9L989.0 390.0L990.5 389.7L992.0 389.1L993.5 389.4L995.0 389.4L996.5 389.4L998.0 390.3L999.5 390.1L1001.0 389.3L1002.5 389.3L1004.0 389.6L1005.5 389.4L1007.0 389.3L1008.5 389.5L1010.0 389.6L1011.5 390.3L1013.0 389.5L1014.5 389.0L1016.0 390.1L1017.5 389.0L1019.0 389.4L1020.5 389.4L1022.0 389.7L1023.5 389.5L1025.0 389.9L1026.5 389.3L1028.0 389.5L1029.5 389.8L1031.0 389.7L1032.5 389.2L1034.0 389.8L1035.5 389.0L1037.0 389.3L1038.5 389.7L1040.0 389.6L1041.5 390.1L1043.0 390.2L1044.5 389.9L1046.0 390.1L1047.5 389.6L1049.0 389.3L1050.5 390.1L1052.0 389.0L1053.5 389.4L1055.0 390.1L1056.5 389.3L1058.0 389.6L1059.5 389.8L1061.0 389.5L1062.5 390.3L1064.0 389.0L1065.5 390.0L1067.0 389.0L1068.5 389.6L1070.0 390.2L1071.5 389.4L1073.0 389.7L1074.5 389.2L1076.0 389.0L1077.5 388.9L1079.0 389.6L1080.5 389.0L1082.0 389.6L1083.5 389.7L1085.0 390.3L1086.5 389.6L1088.0 389.3L1089.5 389.1L1091.0 389.8L1092.5 390.0L1094.0 390.1L1095.5 389.2L1097.0 389.5L1098.5 389.2L1100.0 389.2L1101.5 390.2L1103.0 390.2L1104.5 389.2L1106.0 389.0L1107.5 389.4L1109.0 390.1L1109.0 396.1L1107.5 395.0L1106.0 395.5L1104.5 395.9L1103.0 395.6L1101.5 396.0L1100.0 395.0L1098.5 395.0L1097.0 395.8L1095.5 396.1L1094.0 395.2L1092.5 394.9L1091.0 395.7L1089.5 395.5L1088.0 394.9L1086.5 395.9L1085.0 395.3L1083.5 395.8L1082.0 395.0L1080.5 395.9L1079.0 395.4L1077.5 394.9L1076.0 395.3L1074.5 395.7L1073.0 395.0L1071.5 395.6L1070.0 395.0L1068.5 395.6L1067.0 396.2L1065.5 394.8L1064.0 395.6L1062.5 395.2L1061.0 396.1L1059.5 395.3L1058.0 395.6L1056.5 395.7L1055.0 395.9L1053.5 396.2L1052.0 396.2L1050.5 395.4L1049.0 395.9L1047.5 395.0L1046.0 395.7L1044.5 396.0L1043.0 395.6L1041.5 395.0L1040.0 395.2L1038.5 394.9L1037.0 396.2L1035.5 395.8L1034.0 396.0L1032.5 395.7L1031.0 396.0L1029.5 395.0L1028.0 395.7L1026.5 395.5L1025.0 395.7L1023.5 395.0L1022.0 395.0L1020.5 395.9L1019.0 394.8L1017.5 395.0L1016.0 395.1L1014.5 395.6L1013.0 395.3L1011.5 395.5L1010.0 395.0L1008.5 395.5L1007.0 394.8L1005.5 395.3L1004.0 395.2L1002.5 396.0L1001.0 394.8L999.5 395.0L998.0 394.9L996.5 395.4L995.0 395.8L993.5 395.5L992.0 395.4L990.5 395.6L989.0 396.1L987.5 395.5L986.0 394.8L984.5 395.0L983.0 396.0L981.5 395.6L980.0 396.1L978.5 395.8L977.0 395.0L975.5 395.9L974.0 394.9L972.5 395.9L971.0 395.5L969.5 395.4L968.0 395.4L966.5 395.2L965.0 396.2L963.5 395.2L962.0 394.9L960.5 395.9L959.0 394.8L957.5 395.9L956.0 394.9L954.5 396.0L953.0 396.0L951.5 394.8L950.0 396.1L948.5 395.5L947.0 396.1L945.5 395.0L944.0 396.0L942.5 396.1L941.0 395.3L939.5 394.8L938.0 394.9L936.5 394.9L935.0 396.1L933.5 395.8L932.0 395.8L930.5 394.9L929.0 396.2L927.5 395.3L926.0 395.2L924.5 396.1L923.0 395.9L921.5 394.8L920.0 396.0L918.5 395.7L917.0 394.9L915.5 395.8L914.0 395.0L912.5 395.9L911.0 395.9L909.5 394.9L908.0 395.5L906.5 395.3L905.0 394.9L903.5 395.8L902.0 395.4L900.5 396.2L899.0 394.9L897.5 395.0L896.0 395.5L894.5 396.0L893.0 395.6L891.5 395.6L890.0 395.6L888.5 394.8L887.0 395.9L885.5 395.5L884.0 395.4L882.5 394.9L881.0 395.5L879.5 394.9L878.0 396.2L876.5 395.8L875.0 395.0L873.5 395.1L872.0 396.0L870.5 395.1L869.0 395.3L867.5 395.6L866.0 395.8L864.5 395.1L863.0 395.8L861.5 395.4L860.0 395.7L858.5 396.2L857.0 396.2L855.5 395.1L854.0 395.5L852.5 395.9L851.0 396.0L849.5 395.5L848.0 396.2L846.5 395.9L845.0 395.1L843.5 395.6L842.0 395.0L840.5 395.4L839.0 395.6L837.5 396.0L836.0 395.0L834.5 394.8L833.0 395.1L831.5 396.1L830.0 395.8L828.5 395.8L827.0 395.2L825.5 395.6L824.0 395.2L822.5 395.3L821.0 395.8L819.5 396.1L818.0 394.9L816.5 394.9L815.0 395.6L813.5 395.5L812.0 394.9L810.5 395.6L809.0 394.9L807.5 394.8L806.0 395.2L804.5 396.0L803.0 396.1L801.5 395.7L800.0 395.7L798.5 395.4L797.0 395.6L795.5 395.4L794.0 395.5L792.5 396.1L791.0 395.6L789.5 395.9L788.0 395.4L786.5 396.0L785.0 395.4L783.5 395.0L782.0 395.3L780.5 395.0L779.0 395.5L777.5 394.9L776.0 394.8L774.5 396.0L773.0 396.1L771.5 395.9L770.0 395.1L768.5 395.1L767.0 395.4L765.5 394.8L764.0 396.2L762.5 395.3L761.0 396.1L759.5 395.3L758.0 396.0L756.5 396.1L755.0 395.6L753.5 395.7L752.0 395.2L750.5 395.6L749.0 395.0L747.5 395.0L746.0 396.1L744.5 395.1L743.0 396.2L741.5 396.0L740.0 395.7L738.5 395.4L737.0 396.0L735.5 395.5L734.0 395.9L732.5 395.7L731.0 395.4L729.5 395.2L728.0 396.0L726.5 395.2L725.0 395.7L723.5 395.0L722.0 396.1L720.5 395.4L719.0 396.2L717.5 394.9L716.0 395.5L714.5 395.9L713.0 395.3L711.5 396.1L710.0 396.1L708.5 396.2L707.0 394.8L705.5 396.1L704.0 395.3L702.5 395.8L701.0 395.8L699.5 395.5L698.0 395.8L696.5 396.1L695.0 395.7L693.5 396.0L692.0 396.1L690.5 394.8L689.0 395.6L687.5 396.1L686.0 395.6L684.5 396.2L683.0 395.5L681.5 396.0L680.0 396.0L678.5 396.0L677.0 395.9L675.5 396.0L674.0 395.9L672.5 395.9L671.0 395.5L669.5 395.7L668.0 394.9L666.5 395.6L665.0 395.5L663.5 395.3L662.0 395.4L660.5 395.5L659.0 395.9L657.5 396.1L656.0 395.5L654.5 395.6L653.0 394.9L651.5 395.7L650.0 395.2L648.5 395.4L647.0 396.0L645.5 395.0L644.0 394.9L642.5 396.1L641.0 395.7L639.5 395.3L638.0 396.0L636.5 394.9L635.0 395.6L633.5 395.5L632.0 395.5L630.5 395.6L629.0 395.5L627.5 395.1L626.0 395.2L624.5 395.5L623.0 395.8L621.5 394.8L620.0 395.4L618.5 395.7L617.0 395.0L615.5 396.2L614.0 395.8L612.5 395.4L611.0 395.9L609.5 396.0L608.0 395.2L606.5 395.2L605.0 395.9L603.5 395.2L602.0 396.0L600.5 395.8L599.0 395.0L597.5 395.1L596.0 395.6L594.5 395.7L593.0 395.9L591.5 396.1L590.0 395.7L588.5 395.7L587.0 395.4L585.5 395.2L584.0 396.0L582.5 395.6L581.0 395.4L579.5 395.2L578.0 396.0L576.5 396.0L575.0 395.0L573.5 395.3L572.0 395.9L570.5 395.3L569.0 395.7L567.5 396.0L566.0 395.3L564.5 395.1L563.0 395.1L561.5 395.3L560.0 395.1L558.5 395.7L557.0 396.1L555.5 395.0L554.0 395.3L552.5 396.0L551.0 395.7L549.5 395.4L548.0 395.5L546.5 395.7L545.0 395.3L543.5 395.7L542.0 395.0L540.5 396.1L539.0 395.6L537.5 395.0L536.0 394.9L534.5 395.2L533.0 395.8L531.5 395.9L530.0 394.9L528.5 395.2L527.0 395.9L525.5 394.9L524.0 395.6L522.5 395.2L521.0 395.4L519.5 395.0L518.0 395.4L516.5 394.8L515.0 395.1L513.5 395.7L512.0 395.7L510.5 396.2L509.0 395.8L507.5 395.0L506.0 395.2L504.5 394.9L503.0 395.9L501.5 395.4L500.0 395.8L498.5 395.2L497.0 395.5L495.5 395.2L494.0 396.0L492.5 395.3L491.0 395.5L489.5 395.1L488.0 396.0L486.5 395.6L485.0 395.5L483.5 395.6L482.0 395.6L480.5 395.6L479.0 395.3L477.5 395.9L476.0 395.0L474.5 395.7L473.0 394.9L471.5 396.1L470.0 395.5L468.5 396.1L467.0 395.4L465.5 395.0L464.0 395.0L462.5 395.0L461.0 395.9L459.5 396.1L458.0 396.1L456.5 396.0L455.0 395.4L453.5 395.4L452.0 395.3L450.5 395.0L449.0 395.1L447.5 395.6L446.0 395.1L444.5 395.7L443.0 395.0L441.5 395.6L440.0 395.2L438.5 395.9L437.0 395.2L435.5 395.2L434.0 395.7L432.5 395.3L431.0 395.7L429.5 395.4L428.0 396.0L426.5 395.7L425.0 395.4L423.5 395.7L422.0 395.7L420.5 395.3L419.0 395.8L417.5 395.5L416.0 395.0L414.5 396.1L413.0 396.0L411.5 396.2L410.0 395.5L408.5 395.5L407.0 395.8L405.5 395.0L404.0 396.2L402.5 395.1L401.0 395.1L399.5 395.1L398.0 395.9L396.5 395.1L395.0 395.0L393.5 395.7L392.0 394.9L390.5 395.5L389.0 395.8L387.5 395.2L386.0 395.4L384.5 394.9L383.0 395.2L381.5 396.1L380.0 395.8L378.5 396.1L377.0 395.7L375.5 395.5L374.0 395.0L372.5 395.9L371.0 394.9L369.5 394.8L368.0 394.9L366.5 396.0L365.0 395.6L363.5 395.6L362.0 395.8L360.5 395.8L359.0 395.7L357.5 395.3L356.0 395.8L354.5 395.0L353.0 395.9L351.5 396.0L350.0 395.6L348.5 395.3L347.0 396.0L345.5 395.6L344.0 395.7L342.5 396.1L341.0 395.6L339.5 395.9L338.0 395.9L336.5 395.2L335.0 396.2L333.5 395.7L332.0 395.4L330.5 395.8L329.0 395.8L327.5 395.6L326.0 394.9L324.5 396.1L323.0 395.2L321.5 395.7L320.0 395.5L318.5 396.1L317.0 395.3L315.5 395.4L314.0 396.2L312.5 395.5L311.0 395.8L309.5 395.2L308.0 395.5L306.5 395.3L305.0 395.4L303.5 395.5L302.0 395.7L300.5 394.9L299.0 395.0L297.5 396.0L296.0 395.6L294.5 396.2L293.0 396.1L291.5 394.8L290.0 394.8L288.5 395.7L287.0 396.1L285.5 396.1L284.0 395.1L282.5 396.0L281.0 395.1L279.5 394.8L278.0 396.1L276.5 395.4L275.0 395.9L273.5 395.4L272.0 394.8L270.5 396.0L269.0 394.8L267.5 394.9L266.0 394.9L264.5 395.4L263.0 395.7L261.5 395.8L260.0 395.6L258.5 395.9L257.0 396.1L255.5 394.9L254.0 395.1L252.5 394.9L251.0 395.0L249.5 395.5L248.0 396.2L246.5 395.4L245.0 396.1L243.5 395.2L242.0 395.0L240.5 396.0L239.0 395.5L237.5 395.5L236.0 395.9L234.5 395.0L233.0 396.1L231.5 395.4L230.0 395.4ZM230.0 401.9L231.5 402.1L233.0 402.0L234.5 401.0L236.0 402.3L237.5 402.3L239.0 401.7L240.5 401.8L242.0 401.0L243.5 401.4L245.0 402.1L246.5 402.1L248.0 401.9L249.5 401.0L251.0 401.3L252.5 402.4L254.0 401.4L255.5 401.8L257.0 401.3L258.5 402.0L260.0 402.3L261.5 401.5L263.0 401.2L264.5 401.4L266.0 401.0L267.5 401.5L269.0 402.1L270.5 401.4L272.0 402.0L273.5 402.4L275.0 402.0L276.5 401.0L278.0 401.5L279.5 401.0L281.0 401.3L282.5 401.3L284.0 402.3L285.5 401.5L287.0 401.7L288.5 401.2L290.0 402.1L291.5 401.1L293.0 401.1L294.5 401.9L296.0 401.5L297.5 401.8L299.0 401.4L300.5 401.1L302.0 402.0L303.5 401.2L305.0 402.4L306.5 401.6L308.0 401.8L309.5 401.6L311.0 401.1L312.5 401.0L314.0 402.2L315.5 402.0L317.0 401.9L318.5 401.1L320.0 401.2L321.5 401.4L323.0 402.4L324.5 402.4L326.0 401.7L327.5 401.7L329.0 401.6L330.5 401.5L332.0 402.3L333.5 401.7L335.0 401.1L336.5 402.1L338.0 401.5L339.5 402.1L341.0 401.9L342.5 401.5L344.0 401.4L345.5 402.1L347.0 401.4L348.5 401.9L350.0 401.0L351.5 401.4L353.0 401.6L354.5 401.9L356.0 401.5L357.5 402.0L359.0 401.5L360.5 402.2L362.0 402.4L363.5 401.7L365.0 401.2L366.5 402.3L368.0 402.0L369.5 402.0L371.0 402.1L372.5 401.9L374.0 401.9L375.5 401.9L377.0 401.0L378.5 401.6L380.0 401.3L381.5 401.9L383.0 401.7L384.5 401.1L386.0 401.4L387.5 401.3L389.0 401.7L390.5 401.9L392.0 401.3L393.5 401.0L395.0 401.4L396.5 401.2L398.0 401.5L399.5 401.9L401.0 401.8L402.5 401.8L404.0 402.1L405.5 402.1L407.0 401.5L408.5 401.8L410.0 402.3L411.5 401.9L413.0 402.3L414.5 401.2L416.0 401.9L417.5 401.9L419.0 401.5L420.5 401.3L422.0 402.4L423.5 402.3L425.0 401.8L426.5 402.4L428.0 401.6L429.5 402.4L431.0 401.4L432.5 401.2L434.0 401.6L435.5 402.1L437.0 401.0L438.5 401.4L440.0 402.1L441.5 401.4L443.0 402.4L444.5 401.9L446.0 401.9L447.5 402.0L449.0 402.1L450.5 401.7L452.0 401.4L453.5 401.7L455.0 402.0L456.5 401.1L458.0 401.6L459.5 402.2L461.0 401.0L462.5 401.6L464.0 402.0L465.5 401.7L467.0 401.5L468.5 402.2L470.0 401.4L471.5 401.1L473.0 402.0L474.5 401.4L476.0 402.3L477.5 401.7L479.0 401.7L480.5 401.2L482.0 402.1L483.5 401.3L485.0 402.1L486.5 401.0L488.0 402.4L489.5 402.0L491.0 402.2L492.5 401.9L494.0 402.0L495.5 401.4L497.0 401.2L498.5 401.6L500.0 401.9L501.5 401.2L503.0 401.1L504.5 401.8L506.0 402.2L507.5 401.6L509.0 401.8L510.5 402.3L512.0 401.1L513.5 401.2L515.0 401.7L516.5 401.8L518.0 401.4L519.5 401.4L521.0 401.7L522.5 401.3L524.0 402.0L525.5 402.0L527.0 401.1L528.5 401.1L530.0 401.8L531.5 402.2L533.0 401.5L534.5 401.0L536.0 401.1L537.5 402.3L539.0 401.3L540.5 402.4L542.0 402.1L543.5 401.9L545.0 401.3L546.5 401.9L548.0 401.5L549.5 402.2L551.0 402.1L552.5 402.2L554.0 401.8L555.5 402.0L557.0 401.1L558.5 401.3L560.0 402.2L561.5 402.1L563.0 401.7L564.5 401.9L566.0 401.7L567.5 401.2L569.0 401.5L570.5 402.2L572.0 401.4L573.5 401.2L575.0 401.3L576.5 401.0L578.0 401.5L579.5 402.0L581.0 401.7L582.5 401.2L584.0 401.4L585.5 402.0L587.0 401.3L588.5 401.3L590.0 401.6L591.5 401.5L593.0 401.7L594.5 402.0L596.0 401.2L597.5 401.9L599.0 401.9L600.5 402.4L602.0 401.1L603.5 401.6L605.0 401.8L606.5 401.7L608.0 401.1L609.5 402.3L611.0 402.3L612.5 401.3L614.0 401.6L615.5 401.4L617.0 401.4L618.5 401.1L620.0 401.3L621.5 401.6L623.0 401.1L624.5 401.2L626.0 402.3L627.5 402.2L629.0 401.0L630.5 401.7L632.0 401.5L633.5 402.0L635.0 401.4L636.5 402.2L638.0 401.2L639.5 401.1L641.0 402.1L642.5 401.2L644.0 401.3L645.5 401.6L647.0 401.3L648.5 402.0L650.0 401.3L651.5 401.5L653.0 401.6L654.5 402.1L656.0 402.3L657.5 402.1L659.0 401.6L660.5 401.9L662.0 402.0L663.5 401.4L665.0 401.5L666.5 401.1L668.0 401.4L669.5 401.4L671.0 402.1L672.5 401.0L674.0 401.2L675.5 402.2L677.0 401.9L678.5 401.6L680.0 401.5L681.5 401.8L683.0 402.0L684.5 401.7L686.0 402.0L687.5 402.3L689.0 401.2L690.5 402.3L692.0 401.6L693.5 402.1L695.0 401.7L696.5 401.8L698.0 402.1L699.5 401.1L701.0 401.0L702.5 401.7L704.0 401.5L705.5 401.4L707.0 401.8L708.5 402.1L710.0 401.5L711.5 402.4L713.0 402.2L714.5 401.6L716.0 402.2L717.5 401.1L719.0 401.1L720.5 402.3L722.0 402.1L723.5 402.0L725.0 401.9L726.5 401.5L728.0 401.7L729.5 401.3L731.0 401.4L732.5 401.4L734.0 401.7L735.5 401.6L737.0 402.1L738.5 402.0L740.0 401.8L741.5 401.5L743.0 402.0L744.5 401.4L746.0 401.1L747.5 401.8L749.0 402.0L750.5 402.3L752.0 402.0L753.5 402.1L755.0 402.3L756.5 402.0L758.0 402.0L759.5 401.3L761.0 402.3L762.5 402.4L764.0 401.6L765.5 401.5L767.0 401.9L768.5 402.3L770.0 401.5L771.5 402.0L773.0 402.0L774.5 402.2L776.0 401.4L777.5 401.9L779.0 401.2L780.5 402.1L782.0 401.1L783.5 402.2L785.0 402.0L786.5 401.6L788.0 402.3L789.5 401.4L791.0 402.4L792.5 401.0L794.0 401.8L795.5 401.3L797.0 401.8L798.5 402.0L800.0 401.1L801.5 402.2L803.0 401.4L804.5 401.9L806.0 401.3L807.5 402.2L809.0 401.1L810.5 401.2L812.0 401.2L813.5 401.1L815.0 402.0L816.5 402.1L818.0 402.3L819.5 401.9L821.0 401.1L822.5 401.1L824.0 401.5L825.5 402.0L827.0 401.1L828.5 401.8L830.0 401.2L831.5 401.5L833.0 401.7L834.5 402.3L836.0 402.1L837.5 401.4L839.0 401.7L840.5 402.0L842.0 401.5L843.5 401.7L845.0 402.1L846.5 401.4L848.0 402.2L849.5 401.1L851.0 401.3L852.5 401.1L854.0 401.1L855.5 402.4L857.0 401.5L858.5 401.1L860.0 402.1L861.5 402.1L863.0 401.0L864.5 401.6L866.0 401.7L867.5 401.3L869.0 401.6L870.5 401.1L872.0 402.3L873.5 401.7L875.0 401.5L876.5 401.6L878.0 402.3L879.5 401.9L881.0 401.0L882.5 401.6L884.0 402.2L885.5 401.5L887.0 402.1L888.5 401.2L890.0 401.6L891.5 402.4L893.0 401.6L894.5 401.7L896.0 401.9L897.5 401.2L899.0 401.1L900.5 402.3L902.0 401.3L903.5 402.2L905.0 401.8L906.5 401.3L908.0 402.3L909.5 401.3L911.0 401.4L912.5 401.5L914.0 401.2L915.5 402.4L917.0 401.1L918.5 401.9L920.0 401.5L921.5 401.8L923.0 401.3L924.5 401.4L926.0 402.0L927.5 401.7L929.0 401.0L930.5 401.6L932.0 401.9L933.5 401.1L935.0 401.1L936.5 401.5L938.0 401.4L939.5 401.9L941.0 401.5L942.5 402.0L944.0 402.3L945.5 401.4L947.0 402.3L948.5 401.6L950.0 401.7L951.5 402.3L953.0 401.8L954.5 401.2L956.0 401.7L957.5 401.3L959.0 401.1L960.5 401.5L962.0 402.4L963.5 401.4L965.0 402.0L966.5 402.2L968.0 401.5L969.5 401.3L971.0 402.2L972.5 402.3L974.0 401.2L975.5 402.0L977.0 401.0L978.5 402.2L980.0 402.2L981.5 401.8L983.0 402.0L984.5 401.9L986.0 402.3L987.5 401.1L989.0 401.1L990.5 401.6L992.0 402.2L993.5 401.1L995.0 402.2L996.5 402.1L998.0 401.4L999.5 402.1L1001.0 402.3L1002.5 401.2L1004.0 401.4L1005.5 401.3L1007.0 401.5L1008.5 401.6L1010.0 401.9L1011.5 401.2L1013.0 402.0L1014.5 401.8L1016.0 401.2L1017.5 401.7L1019.0 402.3L1020.5 401.9L1022.0 402.1L1023.5 401.4L1025.0 401.4L1026.5 402.2L1028.0 401.9L1029.5 402.3L1031.0 402.1L1032.5 401.1L1034.0 402.2L1035.5 401.1L1037.0 401.5L1038.5 402.0L1040.0 401.6L1041.5 401.1L1043.0 402.0L1044.5 402.2L1046.0 401.4L1047.5 402.3L1049.0 402.3L1050.5 401.1L1052.0 401.3L1053.5 401.8L1055.0 401.2L1056.5 402.3L1058.0 401.7L1059.5 402.1L1061.0 401.8L1062.5 402.4L1064.0 401.6L1065.5 401.8L1067.0 401.6L1068.5 401.7L1070.0 401.5L1071.5 402.3L1073.0 402.1L1074.5 401.2L1076.0 402.3L1077.5 401.6L1079.0 401.8L1080.5 401.4L1082.0 401.4L1083.5 402.1L1085.0 401.2L1086.5 402.0L1088.0 401.1L1089.5 401.2L1091.0 401.1L1092.5 401.9L1094.0 401.2L1095.5 401.1L1097.0 401.4L1098.5 401.1L1100.0 401.2L1101.5 401.5L1103.0 401.9L1104.5 402.2L1106.0 401.4L1107.5 402.2L1109.0 401.6L1109.0 406.7L1107.5 407.1L1106.0 406.8L1104.5 406.0L1103.0 406.6L1101.5 406.5L1100.0 406.2L1098.5 406.3L1097.0 406.8L1095.5 406.5L1094.0 406.3L1092.5 406.1L1091.0 406.7L1089.5 407.1L1088.0 405.9L1086.5 406.3L1085.0 407.0L1083.5 406.5L1082.0 406.6L1080.5 406.3L1079.0 406.6L1077.5 406.0L1076.0 406.6L1074.5 407.2L1073.0 406.6L1071.5 406.8L1070.0 406.4L1068.5 406.0L1067.0 407.0L1065.5 405.9L1064.0 406.9L1062.5 406.5L1061.0 407.2L1059.5 407.1L1058.0 407.2L1056.5 406.0L1055.0 406.6L1053.5 406.9L1052.0 407.3L1050.5 406.7L1049.0 406.6L1047.5 406.2L1046.0 407.0L1044.5 407.2L1043.0 406.7L1041.5 407.2L1040.0 406.8L1038.5 406.9L1037.0 406.4L1035.5 405.9L1034.0 406.5L1032.5 406.4L1031.0 406.8L1029.5 407.1L1028.0 406.4L1026.5 406.9L1025.0 406.8L1023.5 407.1L1022.0 406.1L1020.5 406.7L1019.0 406.5L1017.5 406.5L1016.0 406.9L1014.5 406.0L1013.0 406.7L1011.5 406.6L1010.0 407.1L1008.5 406.4L1007.0 407.2L1005.5 407.2L1004.0 406.0L1002.5 407.0L1001.0 406.6L999.5 406.6L998.0 407.3L996.5 406.9L995.0 407.1L993.5 406.4L992.0 406.3L990.5 406.4L989.0 407.2L987.5 406.3L986.0 407.1L984.5 407.0L983.0 406.4L981.5 407.1L980.0 407.2L978.5 406.6L977.0 407.2L975.5 406.5L974.0 407.2L972.5 407.1L971.0 406.7L969.5 406.9L968.0 406.4L966.5 406.4L965.0 406.9L963.5 406.2L962.0 406.9L960.5 407.1L959.0 407.2L957.5 406.7L956.0 406.5L954.5 406.8L953.0 406.1L951.5 406.9L950.0 406.8L948.5 406.3L947.0 407.2L945.5 407.1L944.0 405.9L942.5 406.0L941.0 406.6L939.5 406.0L938.0 406.7L936.5 407.3L935.0 406.8L933.5 406.6L932.0 406.2L930.5 406.6L929.0 406.2L927.5 406.3L926.0 407.1L924.5 406.5L923.0 406.5L921.5 405.9L920.0 406.6L918.5 406.8L917.0 407.1L915.5 406.3L914.0 406.6L912.5 406.2L911.0 406.2L909.5 406.7L908.0 407.3L906.5 406.0L905.0 407.1L903.5 406.0L902.0 407.3L900.5 406.1L899.0 406.8L897.5 406.7L896.0 407.1L894.5 406.9L893.0 406.9L891.5 407.0L890.0 405.9L888.5 406.2L887.0 406.1L885.5 405.9L884.0 406.0L882.5 406.1L881.0 406.2L879.5 407.2L878.0 406.4L876.5 406.5L875.0 406.2L873.5 407.2L872.0 406.3L870.5 406.9L869.0 406.6L867.5 405.9L866.0 407.2L864.5 406.8L863.0 406.9L861.5 406.8L860.0 407.3L858.5 406.8L857.0 406.0L855.5 406.5L854.0 406.6L852.5 406.9L851.0 406.4L849.5 406.7L848.0 406.6L846.5 406.8L845.0 406.5L843.5 406.3L842.0 406.9L840.5 406.0L839.0 406.8L837.5 407.1L836.0 406.3L834.5 407.2L833.0 406.0L831.5 406.3L830.0 406.5L828.5 406.8L827.0 406.7L825.5 406.3L824.0 406.7L822.5 407.0L821.0 407.2L819.5 405.9L818.0 406.0L816.5 406.3L815.0 406.2L813.5 406.2L812.0 406.4L810.5 407.2L809.0 407.0L807.5 406.6L806.0 406.3L804.5 406.0L803.0 406.1L801.5 406.0L800.0 406.6L798.5 406.3L797.0 406.4L795.5 407.0L794.0 406.5L792.5 407.1L791.0 407.0L789.5 406.5L788.0 406.9L786.5 406.6L785.0 406.7L783.5 406.1L782.0 406.5L780.5 407.0L779.0 406.4L777.5 406.0L776.0 406.9L774.5 407.0L773.0 406.8L771.5 406.5L770.0 407.1L768.5 406.4L767.0 406.0L765.5 407.1L764.0 407.3L762.5 406.5L761.0 407.0L759.5 406.6L758.0 406.4L756.5 406.1L755.0 406.0L753.5 406.4L752.0 407.2L750.5 406.9L749.0 406.9L747.5 406.2L746.0 406.8L744.5 407.2L743.0 406.6L741.5 406.5L740.0 406.2L738.5 406.4L737.0 406.0L735.5 405.9L734.0 406.3L732.5 406.8L731.0 407.3L729.5 406.8L728.0 406.5L726.5 407.3L725.0 406.2L723.5 406.1L722.0 406.8L720.5 407.0L719.0 406.3L717.5 407.1L716.0 406.6L714.5 407.1L713.0 406.4L711.5 406.1L710.0 407.0L708.5 407.0L707.0 406.8L705.5 407.0L704.0 407.0L702.5 406.1L701.0 406.5L699.5 405.9L698.0 406.7L696.5 407.2L695.0 405.9L693.5 406.0L692.0 406.7L690.5 406.7L689.0 406.9L687.5 406.2L686.0 406.7L684.5 407.1L683.0 407.2L681.5 406.1L680.0 407.3L678.5 406.8L677.0 407.0L675.5 406.0L674.0 406.8L672.5 407.2L671.0 406.5L669.5 407.2L668.0 406.4L666.5 407.1L665.0 407.1L663.5 406.2L662.0 406.3L660.5 406.0L659.0 406.2L657.5 406.5L656.0 406.4L654.5 406.5L653.0 406.9L651.5 407.2L650.0 406.9L648.5 407.2L647.0 407.2L645.5 406.5L644.0 407.2L642.5 407.2L641.0 406.9L639.5 406.2L638.0 406.9L636.5 407.0L635.0 406.7L633.5 406.0L632.0 406.4L630.5 406.5L629.0 406.5L627.5 407.0L626.0 406.5L624.5 406.5L623.0 406.9L621.5 406.6L620.0 406.6L618.5 405.9L617.0 407.2L615.5 406.7L614.0 407.2L612.5 407.2L611.0 407.2L609.5 406.6L608.0 407.2L606.5 406.8L605.0 405.9L603.5 407.2L602.0 406.2L600.5 407.3L599.0 406.7L597.5 406.0L596.0 407.0L594.5 406.3L593.0 406.9L591.5 406.9L590.0 405.9L588.5 407.2L587.0 407.3L585.5 407.1L584.0 406.4L582.5 406.4L581.0 406.0L579.5 406.4L578.0 406.0L576.5 406.0L575.0 406.6L573.5 406.9L572.0 406.9L570.5 407.1L569.0 406.8L567.5 407.1L566.0 407.2L564.5 406.7L563.0 406.1L561.5 407.3L560.0 406.6L558.5 407.2L557.0 407.3L555.5 406.7L554.0 406.5L552.5 406.6L551.0 406.7L549.5 406.4L548.0 407.1L546.5 406.8L545.0 406.8L543.5 406.8L542.0 407.1L540.5 406.4L539.0 407.1L537.5 406.3L536.0 407.1L534.5 406.3L533.0 406.2L531.5 406.6L530.0 407.0L528.5 407.1L527.0 406.4L525.5 406.4L524.0 407.0L522.5 406.8L521.0 407.1L519.5 406.2L518.0 406.5L516.5 406.4L515.0 406.0L513.5 406.4L512.0 406.3L510.5 406.8L509.0 406.6L507.5 406.9L506.0 407.1L504.5 406.3L503.0 407.2L501.5 406.8L500.0 407.2L498.5 407.1L497.0 406.4L495.5 406.0L494.0 407.1L492.5 406.0L491.0 407.0L489.5 407.2L488.0 405.9L486.5 406.3L485.0 406.4L483.5 406.2L482.0 407.2L480.5 406.5L479.0 406.8L477.5 406.5L476.0 407.1L474.5 406.2L473.0 406.7L471.5 406.1L470.0 406.1L468.5 407.0L467.0 406.8L465.5 406.0L464.0 406.4L462.5 406.5L461.0 406.2L459.5 406.5L458.0 406.0L456.5 406.9L455.0 406.5L453.5 406.8L452.0 406.6L450.5 406.8L449.0 406.9L447.5 407.1L446.0 406.5L444.5 406.6L443.0 406.9L441.5 407.1L440.0 407.0L438.5 406.0L437.0 406.6L435.5 406.1L434.0 406.9L432.5 406.4L431.0 406.6L429.5 406.6L428.0 406.9L426.5 406.6L425.0 406.9L423.5 406.0L422.0 406.8L420.5 406.9L419.0 406.7L417.5 406.1L416.0 407.1L414.5 406.5L413.0 407.3L411.5 406.8L410.0 405.9L408.5 406.5L407.0 407.1L405.5 406.4L404.0 406.7L402.5 406.0L401.0 406.8L399.5 407.2L398.0 407.2L396.5 406.1L395.0 406.7L393.5 406.7L392.0 406.0L390.5 406.5L389.0 406.8L387.5 407.3L386.0 407.0L384.5 407.1L383.0 407.0L381.5 407.2L380.0 406.3L378.5 406.4L377.0 407.1L375.5 406.3L374.0 406.2L372.5 406.7L371.0 406.5L369.5 407.1L368.0 406.3L366.5 406.6L365.0 406.1L363.5 406.6L362.0 406.0L360.5 406.3L359.0 406.1L357.5 406.1L356.0 406.4L354.5 406.2L353.0 406.2L351.5 406.4L350.0 406.5L348.5 406.5L347.0 406.0L345.5 406.3L344.0 406.6L342.5 406.3L341.0 406.2L339.5 406.3L338.0 406.2L336.5 406.1L335.0 406.9L333.5 406.8L332.0 406.4L330.5 405.9L329.0 407.1L327.5 406.9L326.0 406.3L324.5 406.7L323.0 406.1L321.5 406.7L320.0 406.1L318.5 406.7L317.0 406.2L315.5 406.0L314.0 407.1L312.5 406.6L311.0 406.0L309.5 406.7L308.0 406.1L306.5 407.0L305.0 406.6L303.5 407.2L302.0 405.9L300.5 407.1L299.0 407.1L297.5 406.9L296.0 406.0L294.5 406.0L293.0 406.8L291.5 406.0L290.0 406.1L288.5 406.3L287.0 406.2L285.5 406.8L284.0 406.0L282.5 406.2L281.0 406.0L279.5 407.2L278.0 406.5L276.5 406.2L275.0 406.1L273.5 407.3L272.0 407.2L270.5 406.6L269.0 406.6L267.5 406.9L266.0 406.4L264.5 406.5L263.0 407.2L261.5 407.1L260.0 406.9L258.5 405.9L257.0 406.0L255.5 406.4L254.0 406.0L252.5 406.1L251.0 407.0L249.5 406.1L248.0 407.1L246.5 407.1L245.0 407.1L243.5 406.0L242.0 407.0L240.5 406.5L239.0 407.0L237.5 407.1L236.0 406.4L234.5 406.6L233.0 406.0L231.5 406.0L230.0 406.3Z" fill="#34d69a"/></svg>
<div class="a" style="left:230px;top:384px;width:195px;height:12.6px;background:#34d69a;"></div>
<div class="fx" style="left:240px;top:387px;background:#f0c828;color:#1a1a1a;">fx</div>
<div class="ct" style="left:258px;top:385.3px;letter-spacing:0.073px;">Echo vom Lizä Ä Chalbärey.mp3</div>
<div class="a" style="left:715px;top:409.5px;width:221.5px;height:74.5px;background:#1e7a56;overflow:hidden;"></div>
<div class="a" style="left:943px;top:409.5px;width:11px;height:74.5px;background:#1e7a56;overflow:hidden;"></div>
<div class="a" style="left:715px;top:409.5px;width:1px;height:74.5px;background:#4fae88;"></div>
<div class="a" style="left:716px;top:410.2px;width:106px;height:12.9px;background:#34d69a;"></div>
<div class="fx" style="left:724.8px;top:412.6px;background:#6f7f78;color:#1a1a1a;">fx</div>
<div class="ct" style="left:743.3px;top:410.8px;letter-spacing:0.041px;">Audio 3_1.wav</div>
<svg style="left:0;top:0" width="1109" height="490"><path d="M817.5 447.2V450.5M818.5 447.2V449.9M819.5 446.4V450.0M820.5 447.2V449.3M821.5 446.4V447.2M822.5 447.2V450.7M823.5 447.2V449.9M824.5 446.4V449.8M825.5 446.4V449.2M826.5 446.4V449.6M827.5 447.2V450.0M828.5 447.2V449.6M829.5 446.4V447.2M831.5 447.2V449.2M832.5 446.4V450.2M835.5 447.2V449.1M836.5 447.2V450.7M837.5 447.2V450.0M838.5 447.2V448.9M839.5 446.4V447.2M840.5 447.2V449.2M841.5 446.4V450.3M842.5 446.4V449.6M843.5 446.4V447.2M844.5 446.4V448.9M845.5 447.2V449.2M847.5 446.4V447.2M848.5 446.4V450.4M849.5 447.2V450.7M850.5 439.2V461.2M851.5 437.5V464.2M852.5 438.2V463.2M853.5 444.2V466.2M854.5 441.2V459.2M855.5 437.2V453.2M856.5 435.2V454.2M857.5 442.2V452.2M858.5 445.2V450.2M859.5 446.4V450.2M860.5 443.2V452.2M861.5 440.2V453.2M862.5 444.2V451.2M863.5 446.4V448.8M864.5 441.2V461.2M865.5 436.2V469.2M866.5 438.2V459.2M867.5 443.2V453.2M868.5 446.4V449.2M869.5 441.2V456.2M870.5 438.7V458.2M871.5 440.2V459.2M872.5 442.2V457.2M873.5 437.7V460.2M874.5 439.2V456.2M875.5 443.2V457.2M876.5 441.2V455.2M877.5 442.2V456.2M878.5 439.7V454.2M879.5 438.7V455.2M880.5 442.2V453.2M881.5 445.2V451.2M882.5 447.2V449.6M883.5 447.2V449.8M884.5 447.2V449.0M886.5 446.4V450.2M887.5 447.2V450.6M888.5 447.2V449.5M889.5 446.4V450.6M890.5 446.4V447.2M891.5 446.4V447.2M892.5 447.2V449.1M893.5 447.2V449.2M895.5 444.7V450.5M896.5 444.7V449.2M897.5 444.7V449.1M898.5 444.7V449.0M900.5 447.2V450.1M901.5 447.2V448.8M902.5 444.7V447.2M903.5 444.7V447.2M904.5 444.7V449.7M905.5 447.2V450.7M916.5 447.2V448.9M917.5 447.2V448.6" stroke="#34d69a" stroke-width="1" fill="none"/></svg>
<div class="a" style="left:716px;top:446.3px;width:220.5px;height:1.7px;background:#a6d1bf;"></div>
<div class="a" style="left:943px;top:446.3px;width:11px;height:1.7px;background:#a6d1bf;"></div>
<div class="a" style="left:943px;top:409.5px;width:1px;height:74.5px;background:#c8dcd4;"></div>
<div class="a" style="left:716.7px;top:469.3px;width:31px;height:11.7px;background:#114b36;"></div>
<div class="t" style="left:718.7px;top:469.5px;color:#cfe6dc;font-size:9px;letter-spacing:-0.05px;">Can. 1</div>
<svg style="left:933px;top:409.5px" width="22" height="5"><path d="M-.5 0H3.500V4ZM17 0H21V4Z" fill="#eaeaea"/></svg>
<div class="a" style="left:8px;top:519px;width:1101px;height:11px;background:#2c2c2c;border-radius:6px 0 0 6px;border-top:1px solid #383838;border-bottom:1px solid #383838;box-sizing:border-box;"></div>
<div class="a" style="left:8px;top:519px;width:252px;height:11px;background:#424242;border-radius:6px;"></div>
<svg style="left:13.7px;top:518.5px" width="12" height="12"><circle cx="6" cy="6" r="4.200" fill="#3a3a3a" stroke="#b4b4b4" stroke-width="1.900"/></svg>
<svg style="left:253.3px;top:518.5px" width="12" height="12"><circle cx="6" cy="6" r="4.200" fill="#3a3a3a" stroke="#b4b4b4" stroke-width="1.900"/></svg>
<div class="a" style="left:0px;top:545.5px;width:1109px;height:9px;background:#393939;"></div>
<div class="a" style="left:0px;top:543.5px;width:1109px;height:2px;background:#242424;"></div>
<div class="a" style="left:971.8px;top:77px;width:1.5px;height:441.5px;background:#3c8ee8;"></div>
<svg style="left:967px;top:64px" width="11" height="14"><path d="M0 0H11V8L5.500 13.300L0 8Z" fill="#399bfb"/><path d="M5.500 9V12.500" stroke="#1a2a4a" stroke-width=".8"/></svg>
</body>
</html>
